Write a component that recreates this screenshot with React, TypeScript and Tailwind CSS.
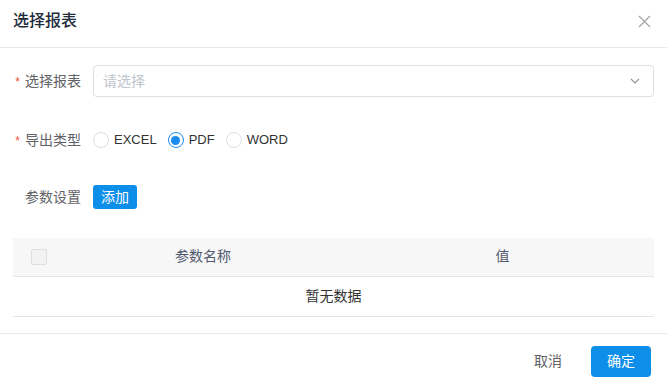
import React, { useState } from "react";

const font = { fontFamily: '"Liberation Sans", "Noto Sans CJK SC", sans-serif' };

const Radio: React.FC<{ label: string; checked: boolean; onClick: () => void }> = ({ label, checked, onClick }) => (
  <label className="flex items-center cursor-pointer mr-[11px]" onClick={onClick}>
    <span
      className={`w-[16px] h-[16px] rounded-full border flex items-center justify-center bg-white ${
        checked ? "border-[#1a8cf0]" : "border-[#dcdfe6]"
      }`}
    >
      {checked && <span className="w-[9px] h-[9px] rounded-full bg-[#1a8cf0]"></span>}
    </span>
    <span className="ml-[5px] text-[13px] text-[#333]">{label}</span>
  </label>
);

export default function App() {
  const [type, setType] = useState("PDF");

  return (
    <div className="w-[667px] h-[387px] bg-white flex flex-col" style={font}>
      <div className="h-[48px] px-[13px] pb-[5px] flex items-center justify-between border-b border-[#e8e8e8]">
        <span className="text-[16px] font-medium text-[#1f2d3d]">选择报表</span>
        <svg width="13" height="13" viewBox="0 0 13 13" className="mr-[3px] mt-[1px]">
          <path d="M1 1L12 12M12 1L1 12" stroke="#a0a0a0" strokeWidth="1.1" fill="none" />
        </svg>
      </div>

      <div className="px-[13px] pt-[17px] flex-1">
        <div className="flex items-center h-[32px]">
          <div className="w-[80px] pr-[12px] flex items-center justify-end text-[14px] text-[#606266]">
            <span className="text-[#f5543c] text-[12px] mr-[5px] mt-[2px]">*</span>选择报表
          </div>
          <div className="flex-1 h-[32px] border border-[#dcdfe6] rounded-[4px] flex items-center justify-between pl-[9px] pr-[13px]">
            <span className="text-[14px] text-[#c0c4cc]">请选择</span>
            <svg width="10" height="6" viewBox="0 0 10 6">
              <path d="M1 1L5 5L9 1" stroke="#909399" strokeWidth="1.1" fill="none" />
            </svg>
          </div>
        </div>

        <div className="flex items-center h-[32px] mt-[27px]">
          <div className="w-[80px] pr-[12px] flex items-center justify-end text-[14px] text-[#606266]">
            <span className="text-[#f5543c] text-[12px] mr-[5px] mt-[2px]">*</span>导出类型
          </div>
          <div className="flex items-center">
            {["EXCEL", "PDF", "WORD"].map((t) => (
              <Radio key={t} label={t} checked={type === t} onClick={() => setType(t)} />
            ))}
          </div>
        </div>

        <div className="flex items-center h-[32px] mt-[25px]">
          <div className="w-[80px] pr-[12px] flex items-center justify-end text-[14px] text-[#606266]">参数设置</div>
          <button className="h-[24px] px-[8px] rounded-[3px] bg-[#0d8ee9] text-white text-[14px] leading-none">添加</button>
        </div>

        <table className="w-full mt-[25px] border-collapse text-[14px]">
          <thead>
            <tr className="bg-[#f7f7f7] h-[38px] border-b border-[#e4e4e4]">
              <th className="w-[42px] pl-[18px] text-left">
                <span className="block w-[16px] h-[16px] border border-[#dcdfe6] bg-[#f2f2f2] rounded-[2px]"></span>
              </th>
              <th className="w-[296px] font-normal text-[#515a6e]">参数名称</th>
              <th className="font-normal text-[#515a6e]">值</th>
            </tr>
          </thead>
          <tbody>
            <tr className="h-[40px] border-b border-[#e4e4e4]">
              <td colSpan={3} className="text-center text-[#333]">
                暂无数据
              </td>
            </tr>
          </tbody>
        </table>
      </div>

      <div className="h-[54px] border-t border-[#e8e8e8] flex items-center justify-end px-[16px] pt-[2px] gap-[29px]">
        <button className="text-[14px] text-[#606266]">取消</button>
        <button className="h-[31px] w-[60px] rounded-[4px] bg-[#0d8ee9] text-white text-[14px]">确定</button>
      </div>
    </div>
  );
}
